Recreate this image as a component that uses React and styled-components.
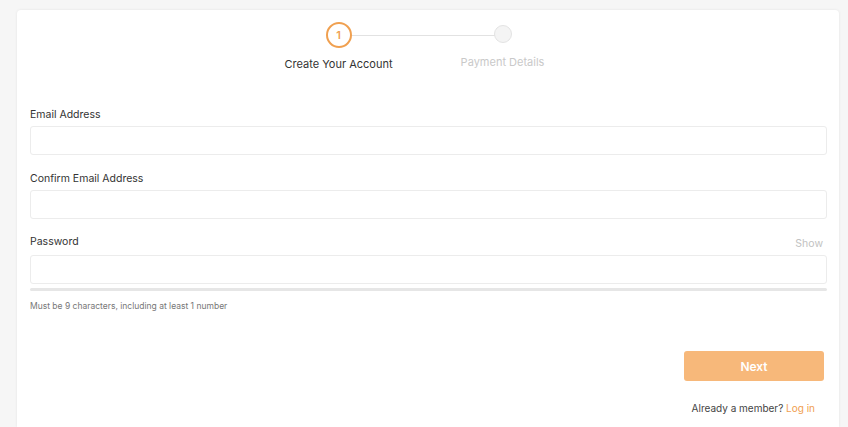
import React from 'react';
import styled, { createGlobalStyle } from 'styled-components';

const Global = createGlobalStyle`
  body { margin: 0; background: #f6f6f6; font-family: Inter, "Noto Sans", sans-serif; }
`;

const Card = styled.div`
  margin: 10px 9px 0 17px;
  height: 417px;
  box-sizing: border-box;
  background: #fff;
  border-radius: 4px 4px 0 0;
  box-shadow: 0 0 3px rgba(0,0,0,0.08);
  padding: 12px 12px 0 13px;
  display: flex;
  flex-direction: column;
`;

const Stepper = styled.div`
  display: flex;
  justify-content: center;
  margin-left: -16px;
  height: 74px;
`;

const Step = styled.div`
  width: 164px;
  display: flex;
  flex-direction: column;
  align-items: center;
  position: relative;
`;

const Line = styled.div`
  position: absolute;
  top: 13px;
  left: 94px;
  width: 148px;
  height: 1px;
  background: #e2e2e2;
`;

const Dot = styled.div`
  width: ${p => (p.$active ? 22 : 16)}px;
  height: ${p => (p.$active ? 22 : 16)}px;
  margin: ${p => (p.$active ? 0 : 3)}px 0;
  border-radius: 50%;
  border: ${p => (p.$active ? '2px solid #f0a050' : '1px solid #e3e3e3')};
  background: ${p => (p.$active ? '#fff' : '#f4f4f4')};
  color: #f0a050;
  font-size: 11px;
  font-weight: 600;
  display: flex;
  align-items: center;
  justify-content: center;
  position: relative;
  z-index: 1;
`;

const StepLabel = styled.div`
  margin-top: 9px;
  font-size: 11px;
  color: ${p => (p.$active ? '#333' : '#c9c9c9')};
`;

const Field = styled.div`
  margin-top: ${p => p.$mt}px;
`;

const LabelRow = styled.div`
  display: flex;
  justify-content: space-between;
  font-size: 10.5px;
  color: #333;
  margin-bottom: 5px;
`;

const ShowLink = styled.span`
  color: #c2c2c2;
  margin-right: 4px;
  margin-top: 2px;
`;

const Input = styled.div`
  height: 27px;
  border: 1px solid #ececec;
  border-radius: 3px;
`;

const Strength = styled.div`
  height: 3px;
  background: #e6e6e6;
  margin-top: 4px;
  border-radius: 2px;
`;

const Hint = styled.div`
  font-size: 8.5px;
  color: #777;
  margin-top: 10px;
`;

const Footer = styled.div`
  margin-top: auto;
  margin-bottom: 13px;
  display: flex;
  flex-direction: column;
  align-items: flex-end;
  padding-right: 3px;
`;

const Next = styled.button`
  width: 140px;
  height: 30px;
  border: none;
  border-radius: 3px;
  background: #f7b87a;
  color: #fff;
  font-family: inherit;
  font-weight: 600;
  font-size: 12px;
`;

const Member = styled.div`
  margin-top: 21px;
  margin-right: 9px;
  font-size: 10px;
  color: #444;
  a { color: #f0a050; text-decoration: none; }
`;

export default function App() {
  return (
    <>
      <Global />
      <Card>
        <Stepper>
          <Step>
            <Dot $active>1</Dot>
            <Line />
            <StepLabel $active>Create Your Account</StepLabel>
          </Step>
          <Step>
            <Dot />
            <StepLabel>Payment Details</StepLabel>
          </Step>
        </Stepper>
        <Field $mt={12}>
          <LabelRow>Email Address</LabelRow>
          <Input />
        </Field>
        <Field $mt={17}>
          <LabelRow>Confirm Email Address</LabelRow>
          <Input />
        </Field>
        <Field $mt={16}>
          <LabelRow>Password<ShowLink>Show</ShowLink></LabelRow>
          <Input />
          <Strength />
        </Field>
        <Hint>Must be 9 characters, including at least 1 number</Hint>
        <Footer>
          <Next>Next</Next>
          <Member>Already a member? <a href="#">Log in</a></Member>
        </Footer>
      </Card>
    </>
  );
}
